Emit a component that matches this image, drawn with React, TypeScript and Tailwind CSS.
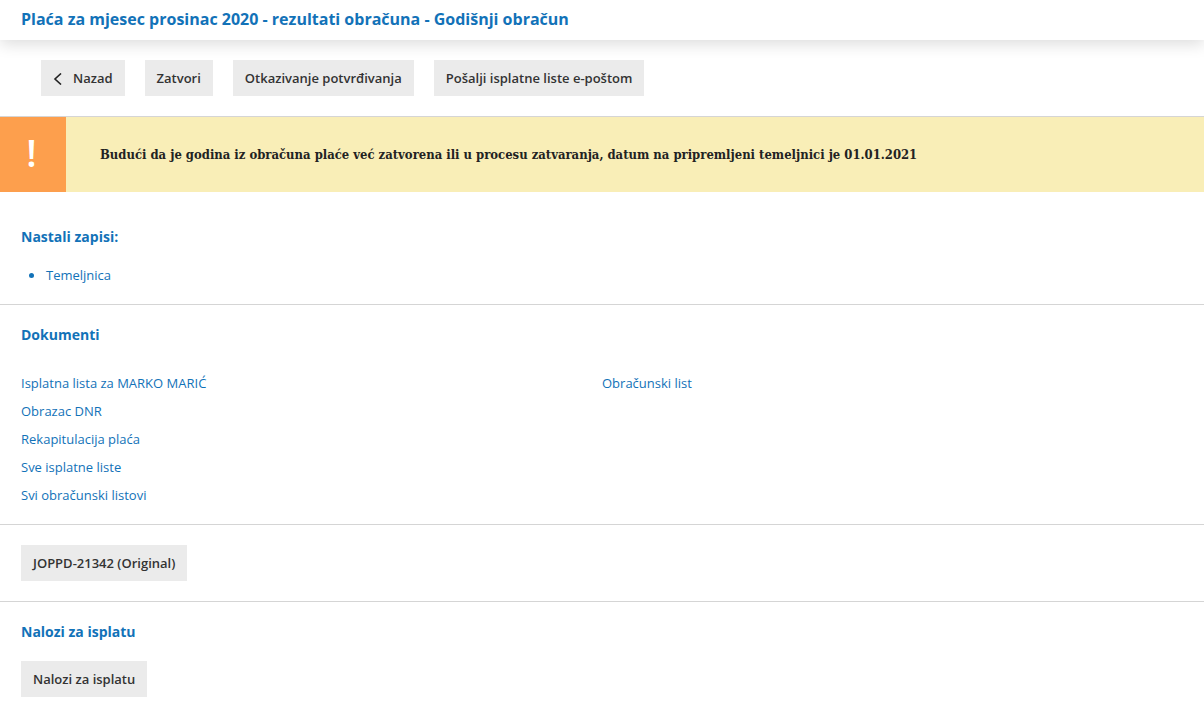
import React from 'react';

const Btn = ({ children, className = '' }: { children: React.ReactNode; className?: string }) => (
  <button className={`h-9 bg-[#ebebeb] px-3 pt-[1px] text-[13px] font-semibold text-[#333] flex items-center ${className}`}>{children}</button>
);

const Heading = ({ children }: { children: React.ReactNode }) => (
  <h2 className="text-sm font-bold leading-5 text-[#1272b8]">{children}</h2>
);

const linkCls = 'block h-7 text-[13px] leading-7 text-[#1272b8]';

export default function App() {
  return (
    <div className="min-h-[713px] overflow-hidden bg-white" style={{ fontFamily: '"Open Sans", sans-serif' }}>
      <header className="flex h-10 items-center px-[21px] pb-[2px] shadow-[0_4px_16px_rgba(0,0,0,0.14)]">
        <h1 className="text-base font-bold text-[#1272b8]">Plaća za mjesec prosinac 2020 - rezultati obračuna - Godišnji obračun</h1>
      </header>
      <div className="flex h-[77px] items-center gap-5 border-b border-[#d5d5d5] pl-[41px]">
        <Btn>
          <svg viewBox="0 0 9 12" className="mr-[11px] h-3 w-[9px] fill-none stroke-[#222] stroke-[1.6]">
            <path d="M8 0.5 L2 6 L8 11.5" />
          </svg>
          Nazad
        </Btn>
        <Btn>Zatvori</Btn>
        <Btn>Otkazivanje potvrđivanja</Btn>
        <Btn>Pošalji isplatne liste e-poštom</Btn>
      </div>
      <div className="flex h-[75px] items-stretch bg-[#f9eeb7]">
        <div className="flex w-[66px] items-center justify-center pb-1 pr-[3px] text-[38px] font-semibold text-white bg-[#fd9f4d]">!</div>
        <p className="flex items-center pl-[34px] pt-[1px] text-[12.95px] font-bold text-[#222]" style={{ fontFamily: '"DejaVu Serif Condensed", "DejaVu Serif", serif', fontStretch: 'condensed' }}>
          Budući da je godina iz obračuna plaće već zatvorena ili u procesu zatvaranja, datum na pripremljeni temeljnici je 01.01.2021
        </p>
      </div>
      <section className="h-[113px] border-b border-[#d5d5d5] px-[21px] pt-[35px]">
        <Heading>Nastali zapisi:</Heading>
        <div className="mt-[19px] flex items-center gap-[12px] pl-[8px] text-[13px] text-[#1272b8]">
          <span className="h-[5px] w-[5px] rounded-full bg-[#1272b8]" />
          Temeljnica
        </div>
      </section>
      <section className="h-[220px] border-b border-[#d5d5d5] px-[21px] pt-5">
        <Heading>Dokumenti</Heading>
        <div className="mt-[24px] grid grid-cols-[581px_1fr]">
          <div>
            <a className={linkCls}>Isplatna lista za MARKO MARIĆ</a>
            <a className={linkCls}>Obrazac DNR</a>
            <a className={linkCls}>Rekapitulacija plaća</a>
            <a className={linkCls}>Sve isplatne liste</a>
            <a className={linkCls}>Svi obračunski listovi</a>
          </div>
          <div>
            <a className={linkCls}>Obračunski list</a>
          </div>
        </div>
      </section>
      <section className="h-[77px] border-b border-[#d5d5d5] px-[21px] pt-5">
        <Btn>JOPPD-21342 (Original)</Btn>
      </section>
      <section className="px-[21px] pt-5">
        <Heading>Nalozi za isplatu</Heading>
        <Btn className="mt-[19px]">Nalozi za isplatu</Btn>
      </section>
    </div>
  );
}
